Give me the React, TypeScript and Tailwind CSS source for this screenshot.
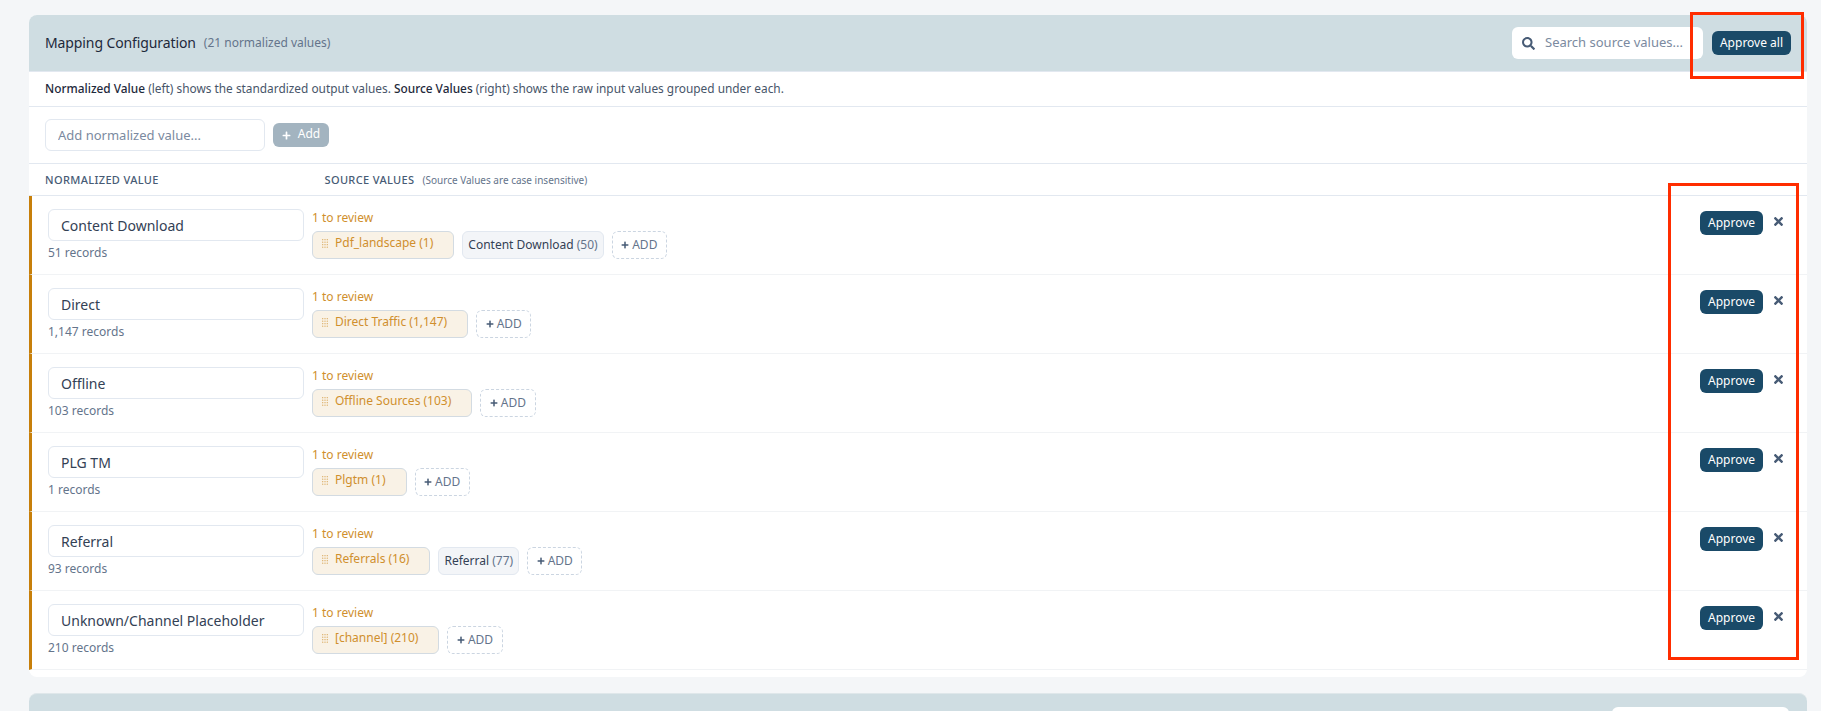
import React from 'react'
import { FaPlus, FaSearch, FaTimes } from 'react-icons/fa'

type Chip = { label: string; count: string; review?: boolean }
type Row = { name: string; records: string; chips: Chip[] }

const rows: Row[] = [
  { name: 'Content Download', records: '51 records', chips: [{ label: 'Pdf_landscape', count: '(1)', review: true }, { label: 'Content Download', count: '(50)' }] },
  { name: 'Direct', records: '1,147 records', chips: [{ label: 'Direct Traffic', count: '(1,147)', review: true }] },
  { name: 'Offline', records: '103 records', chips: [{ label: 'Offline Sources', count: '(103)', review: true }] },
  { name: 'PLG TM', records: '1 records', chips: [{ label: 'Plgtm', count: '(1)', review: true }] },
  { name: 'Referral', records: '93 records', chips: [{ label: 'Referrals', count: '(16)', review: true }, { label: 'Referral', count: '(77)' }] },
  { name: 'Unknown/Channel Placeholder', records: '210 records', chips: [{ label: '[channel]', count: '(210)', review: true }] },
]

const Grip = () => (
  <svg width="6" height="9" viewBox="0 0 6 9" className="shrink-0 fill-[#d9a95c]">
    {[0.7, 3.2, 5.7, 8.2].map((y) => (
      <React.Fragment key={y}>
        <circle cx="0.7" cy={y} r="0.65" />
        <circle cx="3" cy={y} r="0.65" />
        <circle cx="5.3" cy={y} r="0.65" />
      </React.Fragment>
    ))}
  </svg>
)

const SourceChip = ({ chip }: { chip: Chip }) =>
  chip.review ? (
    <div className="flex h-7 items-center gap-[7px] rounded-md border border-[#d3dbe2] bg-[#f9f2e6] pb-1 pl-[9px] pr-5 text-xs text-[#d08f2d]">
      <Grip />
      <span>
        {chip.label} {chip.count}
      </span>
    </div>
  ) : (
    <div className="flex h-7 items-center rounded-md border border-[#e2e8f0] bg-[#f3f5f8] px-[5px] text-xs text-[#334155]">
      <span>
        {chip.label} <span className="text-[#64748b]">{chip.count}</span>
      </span>
    </div>
  )

const MappingRow = ({ row }: { row: Row }) => (
  <div className="flex h-[79px] border-b border-l-[3px] border-b-[#f1f3f5] border-l-[#c77f0a] pl-4 pr-[22px]">
    <div className="w-[256px] shrink-0 pt-[13px]">
      <input
        readOnly
        value={row.name}
        className="h-8 w-full rounded-md border border-[#e2e8f0] bg-white px-3 text-sm text-[#334155] outline-none"
      />
      <div className="mt-[3px] text-xs leading-[18px] text-[#64748b]">{row.records}</div>
    </div>
    <div className="ml-2 pt-[13px]">
      <div className="h-[18px] text-xs leading-[18px] text-[#d08f2d]">1 to review</div>
      <div className="flex items-center gap-2 pt-[4px]">
        {row.chips.map((chip) => (
          <SourceChip key={chip.label} chip={chip} />
        ))}
        <div className="flex h-7 items-center gap-[3px] rounded-md border border-dashed border-[#cbd5e1] px-[8.5px] text-xs text-[#64748b]">
          <FaPlus className="text-[8px] text-[#475b75]" />
          ADD
        </div>
      </div>
    </div>
    <div className="ml-auto flex items-start gap-[9px] pt-[15px]">
      <button className="h-6 w-[63px] rounded-md bg-[#1a4a68] text-xs text-white">Approve</button>
      <FaTimes className="mt-1 text-[13px] text-[#475b75]" />
    </div>
  </div>
)

export default function App() {
  return (
    <div className="relative h-screen overflow-hidden bg-[#f4f6f8] pl-[29px] pr-[14px] pt-[15px] font-['Noto_Sans',sans-serif]">
      <div className="rounded-lg bg-white pb-[7px]">
        <div className="flex h-[57px] items-center rounded-t-lg border-b border-[#e2e8f0] bg-[#cfdde2] px-4">
          <h2 className="text-sm font-normal tracking-[-0.11px] text-[#1e293b]">Mapping Configuration</h2>
          <span className="ml-2 text-xs text-[#64748b]">(21 normalized values)</span>
          <div className="ml-auto flex items-center gap-[9px]">
            <div className="flex h-8 w-[191px] items-center gap-[10px] rounded-md bg-white pl-[10px] text-[13px]">
              <FaSearch className="text-[13px] text-[#475b75]" />
              <span className="text-[#7b8aa0]">Search source values...</span>
            </div>
            <button className="h-6 w-[79px] rounded-md bg-[#1a4a68] text-xs text-white">Approve all</button>
          </div>
        </div>
        <div className="flex h-[35px] items-center border-b border-[#e2e8f0] px-4 text-[11.87px] text-[#475569]">
          <p>
            <span className="font-medium text-[#1e293b]">Normalized Value</span> (left) shows the standardized output values.{' '}
            <span className="font-medium text-[#1e293b]">Source Values</span> (right) shows the raw input values grouped under each.
          </p>
        </div>
        <div className="flex h-[57px] items-center gap-2 border-b border-[#e2e8f0] px-4">
          <input
            placeholder="Add normalized value..."
            className="h-8 w-[220px] rounded-md border border-[#e2e8f0] bg-white px-3 text-[13px] outline-none placeholder:text-[#7b8aa0]"
          />
          <button className="flex h-6 w-14 items-center justify-center gap-[7px] rounded-md bg-[#a3b4c0] pb-[2px] text-xs text-white">
            <FaPlus className="mt-[2px] text-[9px]" />
            Add
          </button>
        </div>
        <div className="flex h-8 items-center border-b border-[#e2e8f0] px-4 pt-px text-[11px] font-medium uppercase tracking-[0.36px] text-[#475b75]">
          <div className="w-[279.5px]">Normalized Value</div>
          <div>Source Values</div>
          <span className="ml-2 text-[10px] font-normal normal-case tracking-normal text-[#64748b]">(Source Values are case insensitive)</span>
        </div>
        {rows.map((row) => (
          <MappingRow key={row.name} row={row} />
        ))}
      </div>
      <div className="mt-4 flex h-14 justify-end rounded-t-lg border-t border-[#dfe7ea] bg-[#cfdde2] pr-[18px] pt-[13px]">
        <div className="h-8 w-[177px] rounded-md bg-white" />
      </div>

      {/* red annotation boxes drawn over the screenshot */}
      <div className="absolute left-[1690px] top-[12px] h-[67px] w-[114px] border-[3px] border-[#ff2d00]" />
      <div className="absolute left-[1668px] top-[183px] h-[477px] w-[131px] border-[3px] border-[#ff2d00]" />
    </div>
  )
}
